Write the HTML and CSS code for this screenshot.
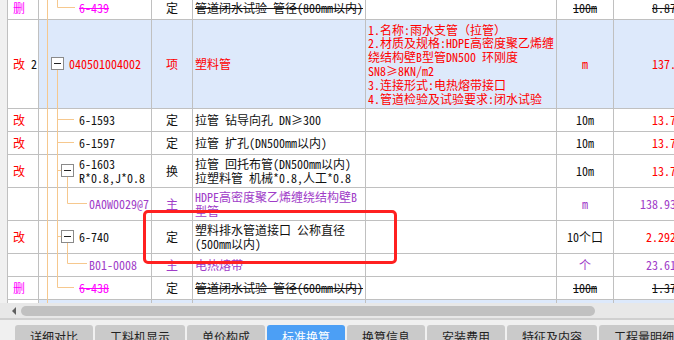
FILE: index.html
```html
<!DOCTYPE html>
<html lang="zh-CN">
<head>
<meta charset="utf-8">
<title>标准换算</title>
<link rel="stylesheet" href="styles.css">
</head>
<body>
<div class="screen">
  <div class="grid-area">
    <div class="strip"></div>
    <div class="table">
      <div class="rows">
        <div class="row h24">
          <div class="cell c1"><span class="mag">删</span></div>
          <div class="cell c2 d1"><span class="mag strike">6-439</span></div>
          <div class="cell c3">定</div>
          <div class="cell c4"><span class="strike">管道闭水试验 管径(800mm以内)</span></div>
          <div class="cell c5"></div>
          <div class="cell c6"><span class="strike">100m</span></div>
          <div class="cell c7"><span class="strike">8.8745</span></div>
        </div>
        <div class="row h89 hl">
          <div class="cell c1"><div><span class="red">改</span>&nbsp;2</div></div>
          <div class="cell c2 d0 red">040501004002</div>
          <div class="cell c3 red">项</div>
          <div class="cell c4 red">塑料管</div>
          <div class="cell c5 red"><div class="lines">1.名称:雨水支管<span class="fw">（拉管）</span><br>2.材质及规格:HDPE高密度聚乙烯缠<br>绕结构壁B型管DN500 环刚度<br>SN8≥8KN/m2<br>3.连接形式:电热熔带接口<br>4.管道检验及试验要求:闭水试验</div></div>
          <div class="cell c6 red">m</div>
          <div class="cell c7 red">137.45</div>
        </div>
        <div class="row h23">
          <div class="cell c1"><span class="red">改</span></div>
          <div class="cell c2 d1">6-1593</div>
          <div class="cell c3">定</div>
          <div class="cell c4">拉管 钻导向孔 DN≥300</div>
          <div class="cell c5"></div>
          <div class="cell c6">10m</div>
          <div class="cell c7 red">13.745</div>
        </div>
        <div class="row h23">
          <div class="cell c1"><span class="red">改</span></div>
          <div class="cell c2 d1">6-1597</div>
          <div class="cell c3">定</div>
          <div class="cell c4">拉管 扩孔(DN500mm以内)</div>
          <div class="cell c5"></div>
          <div class="cell c6">10m</div>
          <div class="cell c7 red">13.745</div>
        </div>
        <div class="row h33">
          <div class="cell c1"><span class="red">改</span></div>
          <div class="cell c2 d1"><div>6-1603<br>R*0.8,J*0.8</div></div>
          <div class="cell c3">换</div>
          <div class="cell c4"><div>拉管 回托布管(DN500mm以内)<br>拉塑料管 机械*0.8,人工*0.8</div></div>
          <div class="cell c5"></div>
          <div class="cell c6">10m</div>
          <div class="cell c7 red">13.745</div>
        </div>
        <div class="row h33">
          <div class="cell c1"></div>
          <div class="cell c2 d2 pur">0A0W0029@7</div>
          <div class="cell c3 pur">主</div>
          <div class="cell c4 pur"><div>HDPE高密度聚乙烯缠绕结构壁B<br>型管</div></div>
          <div class="cell c5"></div>
          <div class="cell c6 pur">m</div>
          <div class="cell c7 pur">138.9345</div>
        </div>
        <div class="row h33">
          <div class="cell c1"><span class="red">改</span></div>
          <div class="cell c2 d1">6-740</div>
          <div class="cell c3">定</div>
          <div class="cell c4"><div>塑料排水管道接口 公称直径<br>(500mm以内)</div></div>
          <div class="cell c5"></div>
          <div class="cell c6">10个口</div>
          <div class="cell c7 red">2.29245</div>
        </div>
        <div class="row h23">
          <div class="cell c1"></div>
          <div class="cell c2 d2 pur">B01-0008</div>
          <div class="cell c3 pur">主</div>
          <div class="cell c4 pur">电热熔带</div>
          <div class="cell c5"></div>
          <div class="cell c6 pur">个</div>
          <div class="cell c7 pur">23.6145</div>
        </div>
        <div class="row h23">
          <div class="cell c1"><span class="mag">删</span></div>
          <div class="cell c2 d1"><span class="mag strike">6-438</span></div>
          <div class="cell c3">定</div>
          <div class="cell c4"><span class="strike">管道闭水试验 管径(600mm以内)</span></div>
          <div class="cell c5"></div>
          <div class="cell c6"><span class="strike">100m</span></div>
          <div class="cell c7"><span class="strike">1.3745</span></div>
        </div>
        <div class="row h23 hl">
          <div class="cell c1"></div>
          <div class="cell c2"></div>
          <div class="cell c3"></div>
          <div class="cell c4"></div>
          <div class="cell c5"></div>
          <div class="cell c6"></div>
          <div class="cell c7"></div>
        </div>
      </div>
    </div>
  </div>

  <svg class="tree" width="674" height="303" viewBox="0 0 674 303">
    <g stroke="#f6c88e" stroke-width="1" fill="none">
      <path d="M47.5 0V303"/>
      <path d="M57.5 0V7.5H75"/>
      <path d="M57.5 69.5V287.5H74"/>
      <path d="M57.5 119.5H74"/>
      <path d="M57.5 142.5H74"/>
      <path d="M57.5 170.5H61.5"/>
      <path d="M67.5 176.5V203.5H87"/>
      <path d="M57.5 236.5H61.5"/>
      <path d="M67.5 242.5V263.5H87"/>
    </g>
    <g stroke="#8a8a8a" fill="#fff">
      <rect x="51.5" y="57.5" width="12" height="12"/>
      <rect x="61.5" y="164.5" width="12" height="12"/>
      <rect x="61.5" y="230.5" width="12" height="12"/>
    </g>
    <g stroke="#222" stroke-width="1">
      <path d="M54 63.5H61"/>
      <path d="M64 170.5H71"/>
      <path d="M64 236.5H71"/>
    </g>
  </svg>

  <div class="callout"></div>

  <div class="hscroll">
    <span class="arrow"></span>
    <span class="thumb"></span>
  </div>

  <div class="tabs">
    <div class="tab w78">详细对比</div>
    <div class="tab w90">工料机显示</div>
    <div class="tab w78">单价构成</div>
    <div class="tab w78 active">标准换算</div>
    <div class="tab w78">换算信息</div>
    <div class="tab w78">安装费用</div>
    <div class="tab w90">特征及内容</div>
    <div class="tab w90">工程量明细</div>
  </div>
</div>
</body>
</html>
```

FILE: styles.css
```css
html, body {
  margin: 0;
  padding: 0;
  background: #f0f0f0;
}

.screen {
  position: relative;
  width: 674px;
  height: 340px;
  overflow: hidden;
  background: #f0f0f0;
  font-family: "Noto Sans CJK SC", sans-serif;
  font-size: 12px;
  color: #111;
}

.grid-area {
  display: flex;
  height: 303px;
  overflow: hidden;
}

.strip {
  flex: none;
  width: 7px;
  background: #f0f0f0;
}

.table {
  flex: 1;
  min-width: 0;
  border-left: 1px solid #c0c0c0;
  background: #fff;
  overflow: hidden;
}

.rows {
  margin-top: -4px;
  font-feature-settings: "hwid";
}

.row {
  display: grid;
  grid-template-columns: 31px 113px 41px 173px 191px 57px 80px;
  box-sizing: border-box;
  border-bottom: 1px solid #c0c0c0;
}

.h23 { height: 23px; }
.h24 { height: 24px; }
.h33 { height: 33px; }
.h89 { height: 89px; }

.cell {
  box-sizing: border-box;
  border-right: 1px solid #c0c0c0;
  display: flex;
  align-items: center;
  white-space: nowrap;
  overflow: hidden;
  line-height: 14px;
}

.hl .cell { background: #dde9fb; }
.hl .cell.c1 { background: #fff; }

.c1 { padding-left: 5px; }
.d0 { padding-left: 30px; }
.d1 { padding-left: 40px; }
.d2 { padding-left: 50px; }
.c3, .c6 { justify-content: center; }
.c4 { padding-left: 2px; }
.c5 { padding-left: 2px; }
.lines { line-height: 13.8px; }
.c7 { justify-content: flex-end; padding-right: 6px; border-right: none; }

.fw { font-feature-settings: normal; }

.red { color: #ff0000; }
.mag { color: #ff00ff; }
.pur { color: #a03cc8; }
.strike { text-decoration: line-through; }

.tree {
  position: absolute;
  left: 0;
  top: 0;
  pointer-events: none;
}

.callout {
  position: absolute;
  left: 143px;
  top: 210px;
  width: 254px;
  height: 54px;
  box-sizing: border-box;
  border: 3px solid #ff2020;
  border-radius: 5px;
  pointer-events: none;
}

.hscroll {
  display: flex;
  align-items: center;
  height: 15px;
  background: #e8e8e8;
  border-bottom: 2px solid #d0d0d0;
  padding-left: 12px;
}

.arrow {
  width: 0;
  height: 0;
  border-top: 4px solid transparent;
  border-bottom: 4px solid transparent;
  border-right: 4px solid #606060;
}

.thumb {
  margin-left: 5px;
  width: 574px;
  height: 10px;
  border-radius: 5px;
  background: #c1c1c1;
}

.tabs {
  display: flex;
  gap: 2px;
  padding-left: 15px;
  padding-top: 5px;
}

.tab {
  flex: none;
  box-sizing: border-box;
  height: 20px;
  padding-top: 5px;
  line-height: 14px;
  text-align: center;
  background: #cacaca;
  border-radius: 3px 3px 0 0;
  color: #222;
  font-size: 12px;
}

.tab.active {
  background: #4c9ff5;
  color: #fff;
}

.w78 { width: 78px; }
.w90 { width: 90px; }
```
